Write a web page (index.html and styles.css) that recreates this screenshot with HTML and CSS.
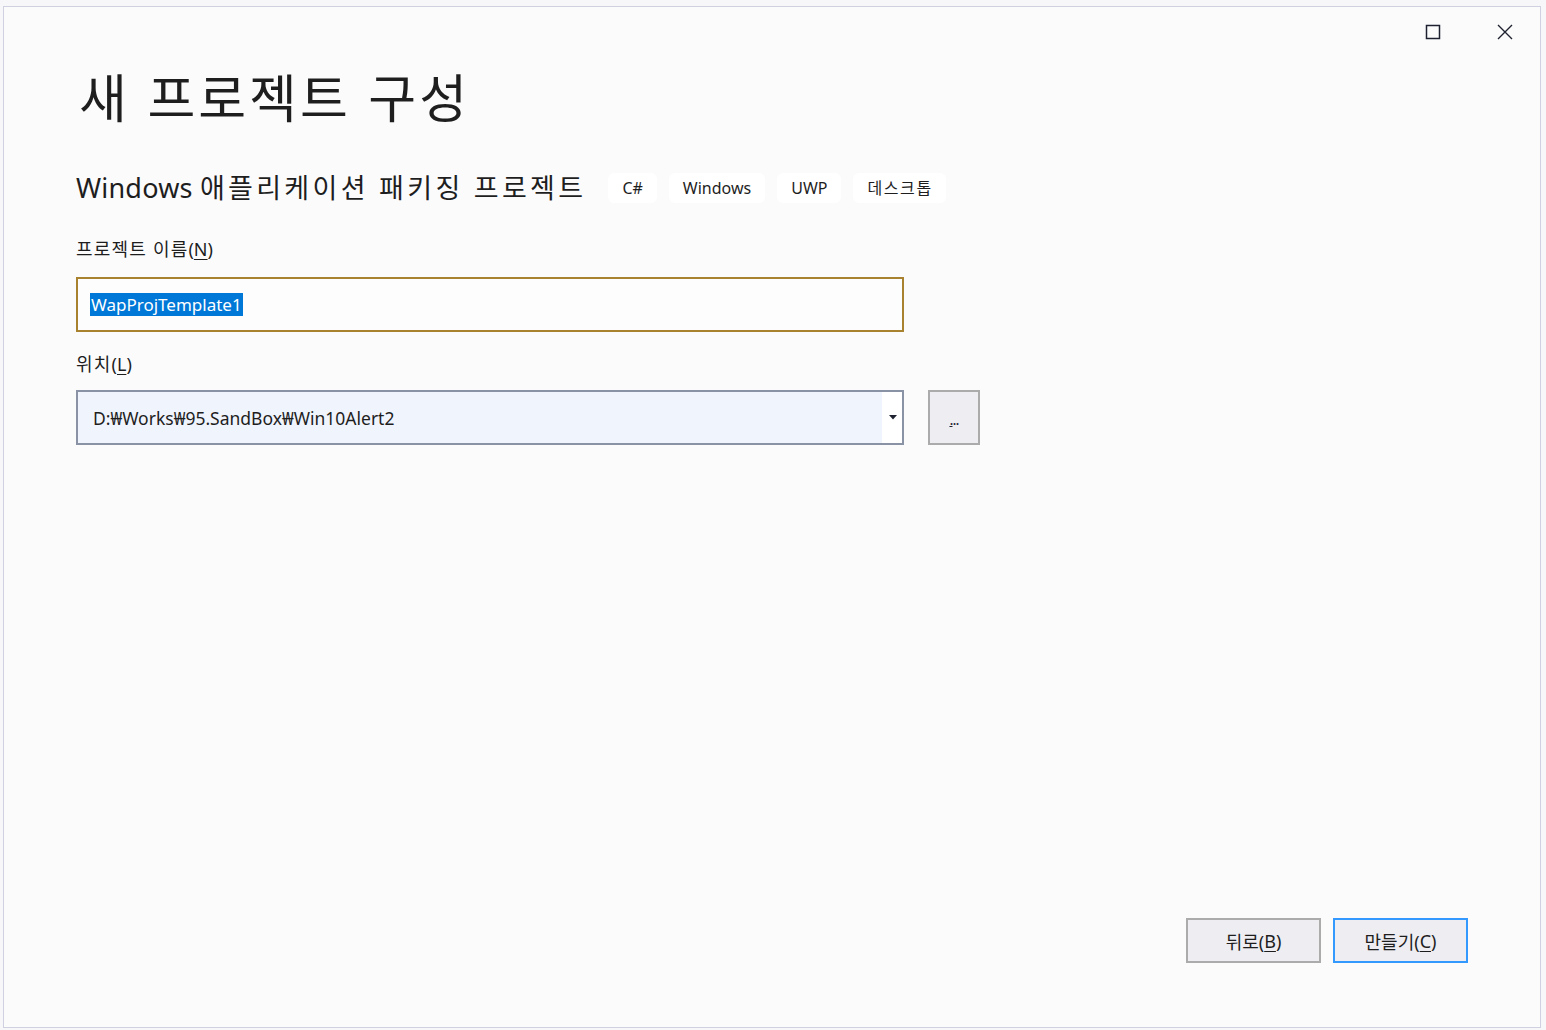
FILE: index.html
```html
<!DOCTYPE html>
<html lang="ko">
<head>
<meta charset="utf-8">
<title>새 프로젝트 구성</title>
<link rel="stylesheet" href="styles.css">
</head>
<body>
<div class="window">
  <div class="controls">
    <span class="ctl"><svg width="16" height="16" viewBox="0 0 16 16"><rect x="1.5" y="1.5" width="13" height="13" fill="none" stroke="#1e2230" stroke-width="1.5"/></svg></span>
    <span class="ctl"><svg width="16" height="16" viewBox="0 0 16 16"><path d="M1 1 L15 15 M15 1 L1 15" stroke="#1e2230" stroke-width="1.4"/></svg></span>
  </div>
  <div class="content">
    <h1 class="title">새 프로젝트 구성</h1>
    <div class="subrow">
      <h2 class="subtitle">Windows <span class="ko">애플리케이션 패키징 프로젝트</span></h2>
      <div class="tags">
        <span class="tag">C#</span>
        <span class="tag">Windows</span>
        <span class="tag">UWP</span>
        <span class="tag ko">데스크톱</span>
      </div>
    </div>
    <div class="label lbl-name"><span class="ko">프로젝트 이름</span>(<u>N</u>)</div>
    <div class="input"><span class="sel">WapProjTemplate1</span></div>
    <div class="label lbl-loc"><span class="ko">위치</span>(<u>L</u>)</div>
    <div class="locrow">
      <div class="combo">
        <span class="combo-text">D:₩Works₩95.SandBox₩Win10Alert2</span>
        <span class="drop"><svg width="8" height="5" viewBox="0 0 8 5"><path d="M0 0 H8 L4 4.5 Z" fill="#1e2230"/></svg></span>
      </div>
      <div class="browse"><span class="dots"><u>.</u>..</span></div>
    </div>
    <div class="spacer"></div>
    <div class="buttons">
      <div class="btn">뒤로(<u>B</u>)</div>
      <div class="btn primary">만들기(<u>C</u>)</div>
    </div>
  </div>
</div>
</body>
</html>
```
FILE: styles.css
```css
html, body {
  margin: 0;
  padding: 0;
  background: #f7f7f9;
  height: 1030px;
  overflow: hidden;
}
body {
  font-family: "Noto Sans", "Noto Sans CJK KR", sans-serif;
  color: #1e1e1e;
}
.window {
  box-sizing: border-box;
  margin: 6px 0 0 3px;
  width: 1538px;
  height: 1022px;
  background: #fbfbfc;
  border: 1px solid #cfd0e0;
  position: relative;
  display: flex;
  flex-direction: column;
}
.controls {
  position: absolute;
  top: 17px;
  right: 27px;
  display: flex;
  gap: 56px;
}
.ctl {
  width: 16px;
  height: 16px;
  display: block;
}
.ctl svg { display: block; }
.content {
  flex: 1;
  display: flex;
  flex-direction: column;
  padding: 0 72px 0 72px;
}
.title {
  margin: 53px 0 0 3px;
  font-family: "Noto Sans CJK KR", sans-serif;
  font-weight: 400;
  font-size: 52px;
  line-height: 72px;
  letter-spacing: 3px;
  color: #1e1e1e;
}
.subrow {
  display: flex;
  align-items: center;
  margin-top: 40px;
  height: 32px;
}
.subtitle {
  margin: 0;
  font-weight: 400;
  font-size: 27px;
  line-height: 32px;
  color: #1e1e1e;
  font-family: "Noto Sans", "Noto Sans CJK KR", sans-serif;
  letter-spacing: 0.2px;
}
.subtitle .ko { letter-spacing: 3.3px; }
.tags {
  display: flex;
  gap: 12px;
  margin-left: 22px;
}
.tag {
  background: #ffffff;
  border-radius: 6px;
  height: 30px;
  line-height: 30px;
  padding: 0 14px;
  font-size: 16px;
  color: #1e1e1e;
}
.tag.ko { letter-spacing: 1.6px; padding-right: 13px; }
.label {
  font-size: 18px;
  line-height: 24px;
  color: #1e1e1e;
}
.label .ko { letter-spacing: 1.2px; }
.label u { text-underline-offset: 3px; }
.lbl-name { margin-top: 33px; }
.input {
  box-sizing: border-box;
  margin-top: 16px;
  width: 828px;
  height: 55px;
  border: 2px solid #a8822f;
  background: #fdfdfd;
  display: flex;
  align-items: center;
  padding-left: 12px;
}
.sel {
  background: #0078d7;
  color: #ffffff;
  font-size: 17px;
  line-height: 23px;
  padding: 0 1px;
}
.lbl-loc { margin-top: 20px; }
.locrow {
  display: flex;
  gap: 24px;
  margin-top: 14px;
}
.combo {
  box-sizing: border-box;
  width: 828px;
  height: 55px;
  border: 2px solid #8993a5;
  background: #f0f4fc;
  display: flex;
  align-items: center;
}
.combo-text {
  flex: 1;
  padding-left: 15px;
  font-size: 17.5px;
  color: #1e1e1e;
}
.drop {
  width: 20px;
  height: 100%;
  background: #ffffff;
  display: flex;
  align-items: center;
  justify-content: center;
}
.drop svg { display: block; margin-left: 1px; }
.browse {
  box-sizing: border-box;
  width: 52px;
  height: 55px;
  border: 2px solid #ababab;
  background: #ededf2;
  display: flex;
  align-items: center;
  justify-content: center;
}
.dots {
  font-size: 15px;
  line-height: 15px;
  color: #1e2230;
  letter-spacing: -1px;
  margin-top: 4px;
}
.spacer { flex: 1; }
.buttons {
  display: flex;
  justify-content: flex-end;
  gap: 12px;
  margin-bottom: 64px;
}
.btn {
  box-sizing: border-box;
  width: 135px;
  height: 45px;
  border: 2px solid #ababab;
  background: #ededf2;
  display: flex;
  align-items: center;
  justify-content: center;
  font-size: 18px;
  color: #1e1e1e;
}
.btn u { text-underline-offset: 3px; }
.btn.primary { border-color: #3399ff; }
```
